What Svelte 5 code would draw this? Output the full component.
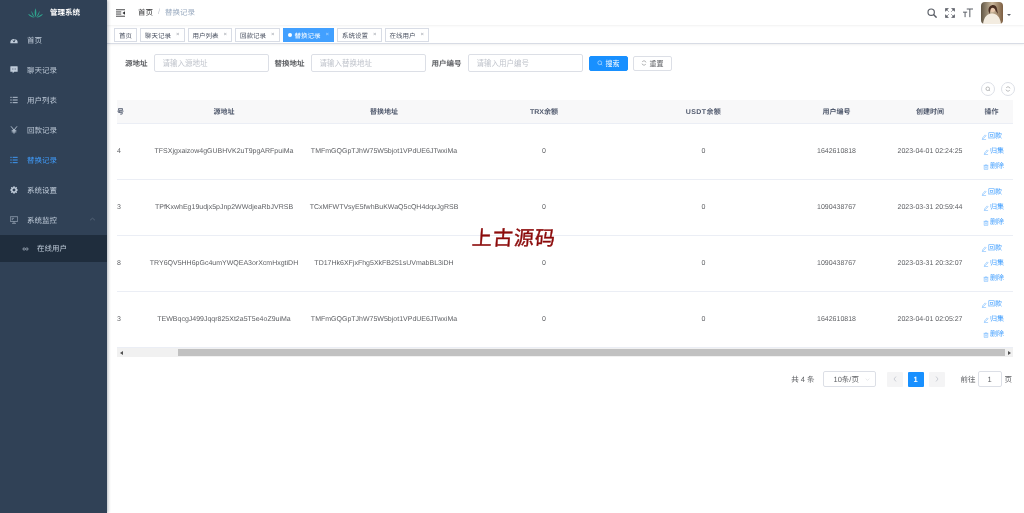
<script>
	const menu = [
		{ name: "首页", icon: "dash" },
		{ name: "聊天记录", icon: "chat" },
		{ name: "用户列表", icon: "list" },
		{ name: "回款记录", icon: "yen" },
		{ name: "替换记录", icon: "list", active: true },
		{ name: "系统设置", icon: "gear" },
		{ name: "系统监控", icon: "monitor", open: true },
	];
	const tags = [
		{ name: "首页", fixed: true },
		{ name: "聊天记录" },
		{ name: "用户列表" },
		{ name: "回款记录" },
		{ name: "替换记录", active: true },
		{ name: "系统设置" },
		{ name: "在线用户" },
	];
	const rows = [
		{ id: "4", src: "TFSXjgxaizow4gGUBHVK2uT9pgARFpuiMa", to: "TMFmGQGpTJhW75W5bjot1VPdUE6JTwxiMa", uid: "1642610818", time: "2023-04-01 02:24:25" },
		{ id: "3", src: "TPfKxwhEg19udjx5pJnp2WWdjeaRbJVRSB", to: "TCxMFWTVsyE5fwhBuKWaQ5cQH4dqxJgRSB", uid: "1090438767", time: "2023-03-31 20:59:44" },
		{ id: "8", src: "TRY6QV5HH6pGc4umYWQEA3orXcmHxgtiDH", to: "TD17Hk6XFjxFhg5XkFB251sUVmabBL3iDH", uid: "1090438767", time: "2023-03-31 20:32:07" },
		{ id: "3", src: "TEWBqcgJ499Jqqr825Xt2a5T5e4oZ9uiMa", to: "TMFmGQGpTJhW75W5bjot1VPdUE6JTwxiMa", uid: "1642610818", time: "2023-04-01 02:05:27" },
	];
</script>

{#snippet menuIcon(kind)}
	<svg class="micon" viewBox="0 0 12 12">
		{#if kind === "dash"}
			<path d="M0.5 10 A5.5 5.5 0 0 1 11.5 10 L11.5 11 L0.5 11 Z" fill="currentColor" />
			<circle cx="6" cy="8" r="1.3" fill="#304156" />
			<path d="M6 8 L8 4" stroke="#304156" stroke-width="0.9" />
			<path d="M3 6 L3.6 6.6 M9 6 L8.4 6.6" stroke="#304156" stroke-width="0.9" />
		{:else if kind === "chat"}
			<path d="M0.5 1 Q0.5 0.5 1 0.5 H11 Q11.5 0.5 11.5 1 V8.5 H6.5 L4 11 V8.5 H0.5 Z" fill="currentColor" />
			<path d="M3 4.5 H9" stroke="#304156" stroke-width="1.1" stroke-dasharray="1.2 1.2" />
		{:else if kind === "list"}
			<path d="M0.5 2 H2.5 M4 2 H11.5 M0.5 6 H2.5 M4 6 H11.5 M0.5 10 H2.5 M4 10 H11.5" stroke="currentColor" stroke-width="1.4" fill="none" />
		{:else if kind === "yen"}
			<path d="M1.5 0.5 L6 6 L10.5 0.5 M6 6 V11.5 M2.5 6.5 H9.5 M2.5 8.8 H9.5" stroke="currentColor" stroke-width="1.3" fill="none" />
		{:else if kind === "gear"}
			<circle cx="6" cy="6" r="3.4" fill="none" stroke="currentColor" stroke-width="2.4" />
			<path d="M6 0 V2.5 M6 9.5 V12 M0 6 H2.5 M9.5 6 H12 M1.8 1.8 L3.5 3.5 M8.5 8.5 L10.2 10.2 M1.8 10.2 L3.5 8.5 M8.5 3.5 L10.2 1.8" stroke="currentColor" stroke-width="1.5" />
		{:else if kind === "monitor"}
			<path d="M0.5 1 H11.5 V8.2 H0.5 Z M6 8.2 V11 M3 11 H9 M2.5 3.5 H6 M2.5 5.5 H4.5" stroke="currentColor" stroke-width="0.8" fill="none" />
		{/if}
	</svg>
{/snippet}

{#snippet editIcon()}
	<svg class="opicon" viewBox="0 0 10 10"><path d="M7 1.5 L8.5 3 L4 7.5 L2.5 8 L3 6 Z M1.5 9.2 H8.5" fill="none" stroke="currentColor" stroke-width="0.7" /></svg>
{/snippet}

<div class="page">
	<aside class="sidebar">
		<div class="logo">
			<svg class="leaf" viewBox="0 0 16 10">
				<path d="M8 9.5 C6.6 6 7 3 8 0 C9 3 9.4 6 8 9.5 Z M7.5 9.5 C5.5 7 4.8 4.5 3.6 2.5 C3.6 5.5 5 8.5 7.5 9.5 Z M8.5 9.5 C10.5 7 11.2 4.5 12.4 2.5 C12.4 5.5 11 8.5 8.5 9.5 Z M7 9.8 C4.5 8.2 2.5 6.5 0 6 C1.5 8.5 4.5 10 7 9.8 Z M9 9.8 C11.5 8.2 13.5 6.5 16 6 C14.5 8.5 11.5 10 9 9.8 Z" fill="#2fa58e" />
			</svg>
			<span>管理系统</span>
		</div>
		<nav>
			{#each menu as item}
				<div class="mitem" class:active={item.active}>
					{@render menuIcon(item.icon)}
					<span>{item.name}</span>
					{#if item.open}
						<svg class="caret" viewBox="0 0 8 5"><path d="M1 4 L4 1.5 L7 4" fill="none" stroke="currentColor" stroke-width="0.7" /></svg>
					{/if}
				</div>
			{/each}
			<div class="subitem">
				<svg class="subicon" viewBox="0 0 10 6"><path d="M3 1.2 A1.8 1.8 0 1 0 3 4.8 L7 1.2 A1.8 1.8 0 1 1 7 4.8 Z" fill="none" stroke="currentColor" stroke-width="1" /></svg>
				<span>在线用户</span>
			</div>
		</nav>
	</aside>

	<main class="main">
		<header class="navbar">
			<svg class="fold" viewBox="0 0 12 10"><path d="M0 0.7 H12 M0 9.3 H12 M0 3.6 H7 M0 6.4 H7" stroke="#303133" stroke-width="1.2" /><path d="M12 2.8 L8.6 5 L12 7.2 Z" fill="#303133" /></svg>
			<div class="crumbs">
				<span class="c1">首页</span>
				<span class="sep">/</span>
				<span class="c2">替换记录</span>
			</div>
			<div class="tools">
				<svg class="tool" viewBox="0 0 12 12"><circle cx="5" cy="5" r="3.8" fill="none" stroke="#5a5e66" stroke-width="1.4" /><path d="M7.8 7.8 L11.5 11.5" stroke="#5a5e66" stroke-width="1.8" /></svg>
				<svg class="tool" viewBox="0 0 12 12"><path d="M0.5 0.5 H4 L0.5 4 Z M11.5 0.5 H8 L11.5 4 Z M0.5 11.5 H4 L0.5 8 Z M11.5 11.5 H8 L11.5 8 Z M2.5 2.5 L4.5 4.5 M9.5 2.5 L7.5 4.5 M2.5 9.5 L4.5 7.5 M9.5 9.5 L7.5 7.5" fill="#5a5e66" stroke="#5a5e66" stroke-width="0.8" /></svg>
				<svg class="tool" viewBox="0 0 12 12"><path d="M4.5 1.2 H12 M8.2 1.2 V11 M0 5 H5 M2.5 5 V11" stroke="#5a5e66" stroke-width="1.2" fill="none" /></svg>
				<svg class="avatar" viewBox="0 0 22 22">
					<defs>
						<linearGradient id="bg" x1="0" y1="0" x2="1" y2="0">
							<stop offset="0" stop-color="#5f5443" />
							<stop offset="0.5" stop-color="#c9b79c" />
							<stop offset="1" stop-color="#7d5f42" />
						</linearGradient>
					</defs>
					<rect width="22" height="22" rx="4" fill="url(#bg)" />
					<path d="M2 22 C3 15 6 11.5 11 11.5 C16 11.5 19 15 20 22 Z" fill="#f3ece0" />
					<circle cx="11.5" cy="7" r="3" fill="#e8c9ae" />
					<path d="M7.5 9 C7 2 15.5 1 16 7 L17 12 L14.5 8.5 C13.5 5 10 5 9.5 8 L8.5 12 Z" fill="#4a2f22" />
				</svg>
				<span class="drop"></span>
			</div>
		</header>

		<div class="tagsbar">
			{#each tags as tag}
				<span class="tag" class:on={tag.active}>
					{#if tag.active}<i class="dot"></i>{/if}
					{tag.name}
					{#if !tag.fixed}<b class="x">×</b>{/if}
				</span>
			{/each}
		</div>

		<section class="content">
			<form class="filters">
				<label for="f1">源地址</label>
				<input id="f1" placeholder="请输入源地址" />
				<label for="f2">替换地址</label>
				<input id="f2" placeholder="请输入替换地址" />
				<label for="f3">用户编号</label>
				<input id="f3" placeholder="请输入用户编号" />
				<button type="button" class="btn primary">
					<svg class="bicon" viewBox="0 0 10 10"><circle cx="4.6" cy="4.6" r="3.2" fill="none" stroke="currentColor" stroke-width="0.8" /><path d="M7 7 L8.8 8.8" stroke="currentColor" stroke-width="0.8" /></svg>
					搜索
				</button>
				<button type="button" class="btn">
					<svg class="bicon" viewBox="0 0 10 10"><path d="M8.3 4 A3.5 3.5 0 0 0 2 3 M1.7 6 A3.5 3.5 0 0 0 8 7" fill="none" stroke="currentColor" stroke-width="0.8" /></svg>
					重置
				</button>
			</form>

			<div class="rowtools">
				<span class="round"><svg viewBox="0 0 10 10"><circle cx="4.6" cy="4.6" r="3" fill="none" stroke="#606266" stroke-width="0.7" /><path d="M7 7 L8.5 8.5" stroke="#606266" stroke-width="0.7" /></svg></span>
				<span class="round"><svg viewBox="0 0 10 10"><path d="M8.3 4 A3.5 3.5 0 0 0 2 3 M1.7 6 A3.5 3.5 0 0 0 8 7" fill="none" stroke="#606266" stroke-width="0.7" /></svg></span>
			</div>

			<table>
				<colgroup>
					<col style="width:27px" /><col style="width:160px" /><col style="width:160px" /><col style="width:160px" />
					<col style="width:159px" /><col style="width:107px" /><col style="width:80px" /><col style="width:43px" />
				</colgroup>
				<thead>
					<tr>
						<th class="num">号</th><th>源地址</th><th>替换地址</th><th>TRX余额</th>
						<th class="sp">USDT余额</th><th>用户编号</th><th>创建时间</th><th>操作</th>
					</tr>
				</thead>
				<tbody>
					{#each rows as row}
						<tr>
							<td class="num">{row.id}</td>
							<td class="addr">{row.src}</td>
							<td class="addr">{row.to}</td>
							<td>0</td>
							<td>0</td>
							<td>{row.uid}</td>
							<td class="time">{row.time}</td>
							<td class="ops">
								<span class="op shift">{@render editIcon()}回款</span>
								<span class="op">{@render editIcon()}归集</span>
								<span class="op">
									<svg class="opicon" viewBox="0 0 10 10"><path d="M2 3 H8 V9 H2 Z M1 2.2 H9 M4 1 H6 M4 4.5 V7.5 M6 4.5 V7.5" fill="none" stroke="currentColor" stroke-width="0.7" /></svg>删除
								</span>
							</td>
						</tr>
					{/each}
				</tbody>
			</table>

			<div class="hscroll">
				<span class="arrow left"></span>
				<div class="track"><div class="thumb"></div></div>
				<span class="arrow right"></span>
			</div>

			<div class="pager">
				<span class="total">共 4 条</span>
				<span class="size">10条/页<svg viewBox="0 0 8 5"><path d="M1 1 L4 4 L7 1" fill="none" stroke="#c0c4cc" stroke-width="0.6" /></svg></span>
				<span class="pg"><svg viewBox="0 0 6 8"><path d="M4 1.5 L2 4 L4 6.5" fill="none" stroke="#c0c4cc" stroke-width="0.8" /></svg></span>
				<span class="pg cur">1</span>
				<span class="pg"><svg viewBox="0 0 6 8"><path d="M2 1.5 L4 4 L2 6.5" fill="none" stroke="#c0c4cc" stroke-width="0.8" /></svg></span>
				<span class="goto">前往</span>
				<span class="jump">1</span>
				<span class="unit">页</span>
			</div>
		</section>

		<div class="watermark">上古源码</div>
	</main>
</div>

<style>
	:global(body) {
		margin: 0;
		background: #fff;
		font-family: "Liberation Sans", "Noto Sans CJK SC", sans-serif;
		text-rendering: geometricPrecision;
	}

	.page {
		display: flex;
		height: 513px;
		overflow: hidden;
	}

	.sidebar {
		width: 107px;
		flex-shrink: 0;
		background: #304156;
		box-shadow: 1px 0 3px rgba(0, 21, 41, 0.3);
		color: #bfcbd9;
		font-size: 7.5px;
		z-index: 1;
	}

	.logo {
		height: 25px;
		display: flex;
		align-items: center;
		padding-left: 28px;
		gap: 7px;
		color: #fff;
		font-weight: 700;
	}

	.leaf {
		width: 15px;
		height: 10px;
	}

	.mitem {
		height: 30px;
		display: flex;
		align-items: center;
		padding-left: 10px;
		position: relative;
	}

	.mitem.active {
		color: #409eff;
	}

	.micon {
		width: 8px;
		height: 8px;
		margin-right: 9px;
		flex-shrink: 0;
	}

	.caret {
		width: 7px;
		height: 4px;
		position: absolute;
		right: 11px;
		top: 12px;
		color: #6f7d8e;
	}

	.subitem {
		height: 27px;
		background: #1f2d3d;
		display: flex;
		align-items: center;
		padding-left: 22px;
		gap: 8px;
	}

	.subicon {
		width: 7px;
		height: 4px;
	}

	.main {
		flex: 1;
		min-width: 0;
		position: relative;
		will-change: transform;
	}

	.navbar {
		height: 25px;
		display: flex;
		align-items: center;
		padding-left: 9px;
		box-shadow: 0 1px 2px rgba(0, 21, 41, 0.06);
		font-size: 7.5px;
	}

	.fold {
		width: 9px;
		height: 8px;
		margin-right: 13px;
	}

	.crumbs {
		display: flex;
		gap: 5px;
	}

	.c1 {
		color: #303133;
	}

	.c2 {
		color: #97a8be;
	}

	.sep {
		color: #c0c4cc;
	}

	.tools {
		margin-left: auto;
		display: flex;
		align-items: center;
		padding-right: 13px;
	}

	.tool {
		width: 10px;
		height: 10px;
		margin-right: 8px;
	}

	.avatar {
		width: 22px;
		height: 22px;
		margin-left: 0;
	}

	.drop {
		width: 0;
		height: 0;
		border: 2px solid transparent;
		border-top: 2.5px solid #5a5e66;
		margin: 6px 0 0 4px;
	}

	.tagsbar {
		height: 17px;
		margin-top: 1px;
		display: flex;
		align-items: center;
		gap: 3px;
		padding-left: 7px;
		border-bottom: 1px solid #d8dce5;
		box-shadow: 0 1px 2px rgba(0, 0, 0, 0.06);
	}

	.tag {
		height: 12px;
		display: flex;
		align-items: center;
		padding: 0 4px;
		border: 1px solid #d8dce5;
		color: #495060;
		font-size: 6.5px;
		white-space: nowrap;
	}

	.tag.on {
		background: #42a0ff;
		border-color: #42a0ff;
		color: #fff;
	}

	.dot {
		width: 4px;
		height: 4px;
		border-radius: 50%;
		background: #fff;
		margin-right: 3px;
	}

	.x {
		font-weight: 400;
		font-size: 6px;
		margin-left: 5px;
		opacity: 0.6;
	}

	.content {
		padding: 10px 11px 0 10px;
	}

	.filters {
		display: flex;
		align-items: center;
		height: 18px;
		font-size: 7.5px;
		padding-left: 8px;
		margin: 0;
	}

	.filters label {
		color: #606266;
		font-weight: 700;
		margin-right: 6px;
		white-space: nowrap;
	}

	.filters input {
		box-sizing: border-box;
		width: 115px;
		height: 18px;
		border: 1px solid #dcdfe6;
		border-radius: 2px;
		padding: 0 8px;
		margin-right: 6px;
		font: inherit;
		outline: none;
	}

	.filters input::placeholder {
		color: #c0c4cc;
	}

	.btn {
		box-sizing: border-box;
		height: 15px;
		width: 39px;
		display: flex;
		align-items: center;
		justify-content: center;
		gap: 3px;
		padding: 0;
		margin-right: 5px;
		background: #fff;
		border: 1px solid #dcdfe6;
		border-radius: 2px;
		color: #606266;
		font: inherit;
		font-size: 7px;
	}

	.btn.primary {
		background: #1890ff;
		border-color: #1890ff;
		color: #fff;
	}

	.bicon {
		width: 6px;
		height: 6px;
	}

	.rowtools {
		display: flex;
		justify-content: flex-end;
		gap: 6px;
		margin: 10px -2px 4px 0;
	}

	.round {
		box-sizing: border-box;
		width: 14px;
		height: 14px;
		border: 1px solid #dcdfe6;
		border-radius: 50%;
		display: flex;
		align-items: center;
		justify-content: center;
	}

	.round svg {
		width: 6px;
		height: 6px;
	}

	table {
		width: 896px;
		table-layout: fixed;
		border-collapse: collapse;
		font-size: 7px;
		color: #606266;
		text-align: center;
	}

	th {
		height: 23px;
		padding: 0;
		background: #f8f8f9;
		border-bottom: 1px solid #ebeef5;
		color: #515a6e;
		font-weight: 700;
		font-size: 7px;
	}

	th.sp {
		letter-spacing: 0.4px;
	}

	td {
		height: 55px;
		padding: 0;
		border-bottom: 1px solid #ebeef5;
		line-height: 12px;
	}

	.num {
		text-align: left;
	}

	.addr {
		padding: 0 4px;
		word-break: break-all;
	}

	.time {
		white-space: nowrap;
	}

	.ops {
		font-size: 7px;
		color: #409eff;
		transform: translateX(2px);
	}

	.op {
		display: flex;
		align-items: center;
		justify-content: center;
		height: 15px;
		white-space: nowrap;
	}

	.op.shift {
		transform: translateX(-2px);
	}

	.opicon {
		width: 6px;
		height: 6px;
		margin-right: 1px;
	}

	.hscroll {
		height: 9px;
		display: flex;
		align-items: center;
		background: #f1f1f1;
		width: 896px;
	}

	.arrow {
		width: 0;
		height: 0;
		border: 2px solid transparent;
		margin: 0 3px;
	}

	.arrow.left {
		border-right: 3px solid #505050;
		margin-left: 1px;
	}

	.arrow.right {
		border-left: 3px solid #505050;
		margin-right: 0;
	}

	.track {
		flex: 1;
		height: 7px;
		padding-left: 52px;
	}

	.thumb {
		height: 100%;
		background: #c1c1c1;
	}

	.pager {
		display: flex;
		align-items: center;
		justify-content: flex-end;
		height: 16px;
		margin: 14px 1px 0 0;
		font-size: 7.5px;
		color: #606266;
	}

	.total {
		margin-right: 8px;
	}

	.size {
		box-sizing: border-box;
		width: 53px;
		height: 16px;
		border: 1px solid #dcdfe6;
		border-radius: 2px;
		display: flex;
		align-items: center;
		padding-left: 10px;
		margin-right: 11px;
		position: relative;
	}

	.size svg {
		width: 5px;
		height: 3px;
		position: absolute;
		right: 5px;
		top: 6px;
	}

	.pg {
		width: 16px;
		height: 15px;
		border-radius: 1px;
		background: #f4f4f5;
		display: flex;
		align-items: center;
		justify-content: center;
		margin-right: 5px;
		font-weight: 700;
	}

	.pg svg {
		width: 6px;
		height: 8px;
	}

	.pg.cur {
		background: #1890ff;
		color: #fff;
	}

	.goto {
		margin-left: 11px;
	}

	.jump {
		box-sizing: border-box;
		width: 24px;
		height: 16px;
		border: 1px solid #dcdfe6;
		border-radius: 2px;
		display: flex;
		align-items: center;
		justify-content: center;
		margin: 0 3px 0 2px;
	}

	.watermark {
		position: absolute;
		left: 365px;
		top: 226px;
		font-size: 20px;
		line-height: 26px;
		letter-spacing: 1px;
		font-weight: 400;
		-webkit-text-stroke: 0.4px #8b0a0a;
		color: #8b0a0a;
		transform: skewX(-4deg);
		white-space: nowrap;
	}
</style>
